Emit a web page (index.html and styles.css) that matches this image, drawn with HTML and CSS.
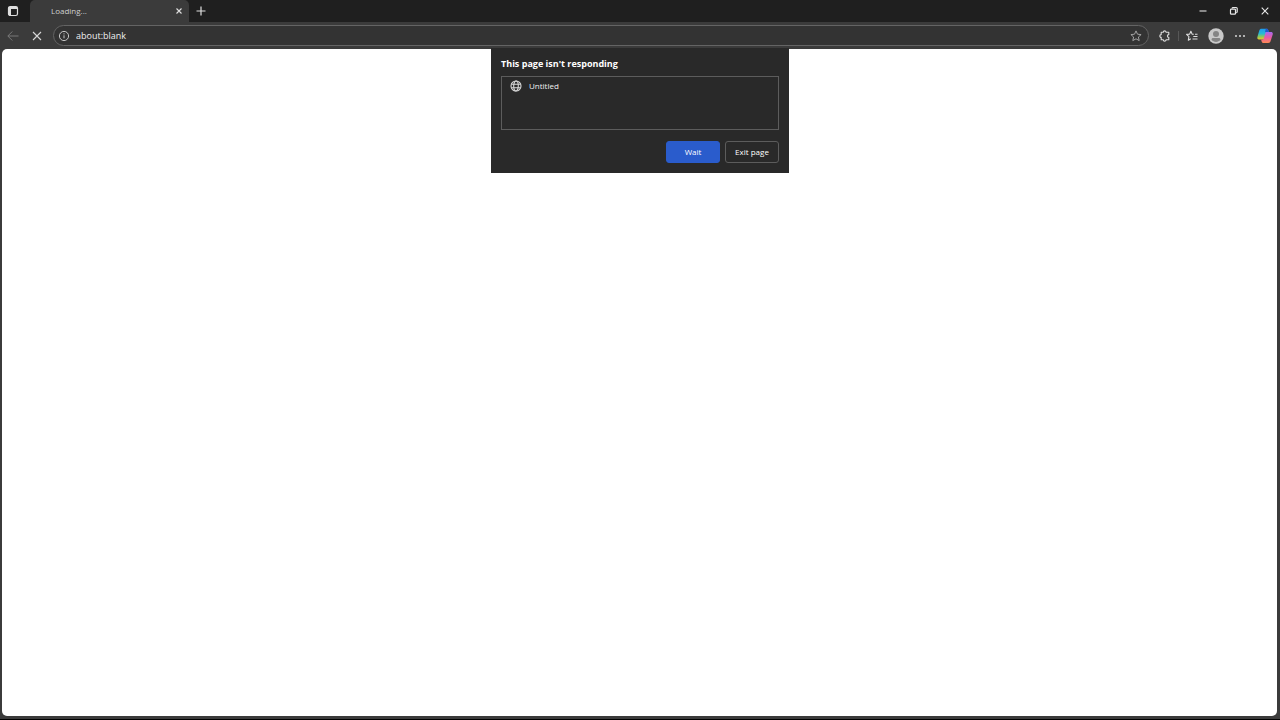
FILE: index.html
```html
<!DOCTYPE html>
<html lang="en">
<head>
    <meta charset="UTF-8">
    <meta name="viewport" content="width=device-width, initial-scale=1.0">
    <title>Loading...</title>
    <link rel="stylesheet" href="styles.css">
</head>
<body>
    <!-- Tab strip -->
    <header class="titlebar">
        <button type="button" class="icon-button tab-actions" aria-label="Tab actions">
            <svg width="12" height="12" viewBox="0 0 12 12">
                <rect x="1.5" y="1.5" width="9" height="9" rx="1.8" fill="none" stroke="#dedede" stroke-width="1.2"/>
                <path d="M1.5 4V3.2a1.7 1.7 0 0 1 1.7-1.7h5.6a1.7 1.7 0 0 1 1.7 1.7V4H4v6.5h-.8a1.7 1.7 0 0 1-1.7-1.7z" fill="#dedede"/>
            </svg>
        </button>
        <div class="tab">
            <span class="tab-title">Loading...</span>
            <button type="button" class="icon-button tab-close" aria-label="Close tab">
                <svg width="8" height="8" viewBox="0 0 8 8">
                    <path d="M1.5 1.5l5 5M6.5 1.5l-5 5" stroke="#e0e0e0" stroke-width="1.1"/>
                </svg>
            </button>
        </div>
        <button type="button" class="icon-button new-tab" aria-label="New tab">
            <svg width="12" height="12" viewBox="0 0 12 12">
                <path d="M6 1.5v9M1.500 6h9" stroke="#e0e0e0" stroke-width="1.2"/>
            </svg>
        </button>
        <div class="window-controls">
            <button type="button" class="icon-button" aria-label="Minimize">
                <svg width="10" height="10" viewBox="0 0 10 10">
                    <path d="M1.5 5h7" stroke="#d0d0d0" stroke-width="1.2"/>
                </svg>
            </button>
            <button type="button" class="icon-button" aria-label="Restore">
                <svg width="10" height="10" viewBox="0 0 10 10" fill="none" stroke="#e8e8e8" stroke-width="1.2">
                    <rect x="1.5" y="3.2" width="5" height="5" rx="0.8"/>
                    <path d="M3.2 2.500V2.300c0-.5.4-.8.8-.8h3.200c.6 0 1 .4 1 1v3.300c0 .5-.3.8-.8.8h-.2"/>
                </svg>
            </button>
            <button type="button" class="icon-button" aria-label="Close">
                <svg width="10" height="10" viewBox="0 0 10 10">
                    <path d="M1.7 1.7l6.600 6.600M8.300 1.700L1.700 8.300" stroke="#e8e8e8" stroke-width="1.1"/>
                </svg>
            </button>
        </div>
    </header>

    <!-- Navigation and address bar -->
    <nav class="toolbar">
        <button type="button" class="icon-button" aria-label="Back" disabled>
            <svg width="12" height="12" viewBox="0 0 12 12" fill="none" stroke="#787878">
                <path d="M11.500 6H1M5.300 1.500L.8 6l4.500 4.500"/>
            </svg>
        </button>
        <button type="button" class="icon-button" aria-label="Stop loading">
            <svg width="10" height="10" viewBox="0 0 10 10">
                <path d="M1 1l8 8M9 1L1 9" stroke="#d8d8d8" stroke-width="1.1"/>
            </svg>
        </button>
        <div class="address-bar">
            <svg width="12" height="12" viewBox="0 0 12 12" fill="none" stroke="#c4c4c4">
                <circle cx="6" cy="6" r="4.600"/>
                <path d="M6 5.300v3M6 3.300v1.100"/>
            </svg>
            <input type="text" class="address-input" aria-label="Address" value="about:blank">
            <button type="button" class="icon-button" aria-label="Add to favorites">
                <svg width="12" height="12" viewBox="0 0 12 12" fill="none" stroke="#a2a2a2" stroke-linejoin="round">
                    <path d="M6 .9l1.500 3.300 3.600.4-2.700 2.400.8 3.600L6 8.800l-3.200 1.800.8-3.600L.9 4.600l3.600-.4z"/>
                </svg>
            </button>
        </div>
        <div class="toolbar-actions">
            <button type="button" class="icon-button" aria-label="Extensions">
                <svg width="12" height="12" viewBox="0 0 12 12" fill="none" stroke="#dcdcdc" stroke-width="1.1" stroke-linejoin="round">
                    <path d="M2.200 2.300h2.100a1.400 1.400 0 0 1 2.800 0h2.700v2.300a1.400 1.400 0 0 0 0 2.800v2.300H7.100a1.400 1.400 0 0 1-2.800 0H2.200V7.400a1.400 1.400 0 0 1 0-2.800z"/>
                </svg>
            </button>
            <span class="divider"></span>
            <button type="button" class="icon-button" aria-label="Favorites">
                <svg width="12" height="12" viewBox="0 0 12 12" fill="none" stroke="#dcdcdc" stroke-width="1.1" stroke-linejoin="round">
                    <path d="M7.800 4.300l-1.700-.2L4.900 1.200 3.600 4.100l-3 .3 2.300 2.200-.6 3.700 2.500-1.500M7.300 6.500h4.200M6.500 9h5M9 4.200h2.500"/>
                </svg>
            </button>
            <button type="button" class="icon-button avatar" aria-label="Profile">
                <svg width="16" height="16" viewBox="0 0 16 16">
                    <circle cx="8" cy="8" r="7.700" fill="#c9c9c9"/>
                    <circle cx="8" cy="6" r="3" fill="#858585"/>
                    <path d="M3.500 11.800c0-1 .7-1.700 1.700-1.700h5.600c1 0 1.700.7 1.700 1.700-1.200 1.400-2.700 2.100-4.500 2.100s-3.300-.7-4.500-2.100z" fill="#858585"/>
                </svg>
            </button>
            <button type="button" class="icon-button" aria-label="Settings and more">
                <svg width="12" height="12" viewBox="0 0 12 12" fill="#d8d8d8">
                    <circle cx="2" cy="6" r="1"/>
                    <circle cx="6" cy="6" r="1"/>
                    <circle cx="10" cy="6" r="1"/>
                </svg>
            </button>
            <button type="button" class="icon-button copilot" aria-label="Copilot">
                <svg width="16" height="16" viewBox="0 0 16 16">
                    <defs>
                        <linearGradient id="cool" x1="0" y1="0" x2="0" y2="1">
                            <stop offset="0" stop-color="#1c9bf0"/>
                            <stop offset="0.45" stop-color="#28b9d4"/>
                            <stop offset="0.75" stop-color="#8fca55"/>
                            <stop offset="1" stop-color="#f2c42d"/>
                        </linearGradient>
                        <linearGradient id="warm" x1="0" y1="0" x2="0" y2="1">
                            <stop offset="0" stop-color="#a66af0"/>
                            <stop offset="0.5" stop-color="#e85aa5"/>
                            <stop offset="1" stop-color="#ff8a52"/>
                        </linearGradient>
                    </defs>
                    <path d="M4.600.8h4.900c1 0 1.500.6 1.800 1.500l.4 1.500-1.900 6.200c-.3 1-.8 1.500-1.800 1.500H2C.6 11.500 0 10.500.4 9l1.900-6.400C2.700 1.400 3.400.8 4.600.8z" fill="url(#cool)"/>
                    <path d="M8.800.8h.7c1 0 1.500.6 1.800 1.500l.4 1.700H8z" fill="#2456cf"/>
                    <path d="M9.600 4h4.300c1.500 0 2.200 1 1.800 2.500l-2 6.300c-.4 1.400-1.100 2.200-2.500 2.200H6.400c-1 0-1.500-.6-1.800-1.500l-.5-2h1.500c.6 0 1-.4 1.200-1l1.500-5.200C8.500 4.500 8.900 4 9.600 4z" fill="url(#warm)"/>
                </svg>
            </button>
        </div>
    </nav>

    <main class="content">
        <div class="page"></div>
        <section class="dialog" role="dialog" aria-labelledby="dialogTitle">
            <h1 id="dialogTitle" class="dialog-title">This page isn't responding</h1>
            <ul class="page-list">
                <li class="page-item">
                    <svg width="12" height="12" viewBox="0 0 12 12" fill="none" stroke="#d8d8d8" stroke-width="1.1">
                        <circle cx="6" cy="6" r="5"/>
                        <ellipse cx="6" cy="6" rx="2.300" ry="5"/>
                        <path d="M1.500 4.200h9M1.500 7.800h9"/>
                    </svg>
                    <span>Untitled</span>
                </li>
            </ul>
            <div class="dialog-buttons">
                <button type="button" class="button primary">Wait</button>
                <button type="button" class="button">Exit page</button>
            </div>
        </section>
    </main>
</body>
</html>
```
FILE: styles.css
```css
* {
    box-sizing: border-box;
}

body {
    margin: 0;
    height: 100vh;
    display: flex;
    flex-direction: column;
    background-color: #3b3b3b;
    border-bottom: 1px solid #000;
    color: #f0f0f0;
    font-family: "Open Sans", "Noto Sans", sans-serif;
    font-size: 8px;
    overflow: hidden;
}

button,
input {
    font: inherit;
    color: inherit;
}

svg {
    display: block;
}

.icon-button {
    display: flex;
    align-items: center;
    justify-content: center;
    width: 24px;
    height: 20px;
    padding: 0;
    border: none;
    background: none;
    flex-shrink: 0;
}

/* Tab strip */
.titlebar {
    display: flex;
    align-items: center;
    height: 22px;
    background-color: #1f1f1f;
}

.tab-actions {
    width: 26px;
    margin-right: 4px;
}

.tab {
    display: flex;
    align-items: center;
    justify-content: space-between;
    width: 159px;
    height: 22px;
    padding-left: 21px;
    background-color: #3b3b3b;
    border-radius: 5px 5px 0 0;
}

.tab-title {
    padding-bottom: 2px;
    color: #cfcfcf;
}

.tab-close {
    width: 20px;
}

.window-controls {
    display: flex;
    gap: 7px;
    margin-left: auto;
    padding-right: 3px;
}

/* Toolbar */
.toolbar {
    display: flex;
    align-items: center;
    height: 27px;
    padding-left: 1px;
    flex-shrink: 0;
}

.address-bar {
    display: flex;
    align-items: center;
    flex: 1;
    height: 21px;
    margin-left: 4px;
    padding-left: 4px;
    background-color: #333;
    border: 1px solid #646464;
    border-radius: 11px;
}

.address-input {
    flex: 1;
    min-width: 0;
    margin-left: 6px;
    padding: 0;
    border: none;
    outline: none;
    background: none;
    font-size: 9px;
}

.toolbar-actions {
    display: flex;
    align-items: center;
    padding-left: 4px;
}

.divider {
    width: 1px;
    height: 10px;
    margin: 0 1px;
    background-color: #575757;
}

.copilot {
    width: 28px;
    padding-right: 2px;
}

/* Page area */
.content {
    position: relative;
    display: flex;
    flex: 1;
    padding: 0 3px 3px 2px;
}

.page {
    flex: 1;
    background-color: #fff;
    border-radius: 5px;
}

/* Dialog hangs from the bottom of the toolbar */
.dialog {
    position: absolute;
    top: -1px;
    left: 50%;
    transform: translateX(-50%);
    width: 298px;
    padding: 9px 10px 10px;
    background-color: #292929;
}

.dialog-title {
    margin: 0;
    font-size: 9px;
    line-height: 14px;
    color: #fff;
}

.page-list {
    height: 54px;
    margin: 5px 0 11px;
    padding: 3px 8px;
    border: 1px solid #5c5c5c;
    list-style: none;
}

.page-item {
    display: flex;
    align-items: center;
    gap: 7px;
    line-height: 12px;
}

.dialog-buttons {
    display: flex;
    justify-content: flex-end;
    gap: 5px;
}

.button {
    width: 54px;
    height: 22px;
    padding: 0 0 2px;
    background-color: #292929;
    border: 1px solid #5c5c5c;
    border-radius: 3px;
    color: #fff;
}

.primary {
    background-color: #2a5ccc;
    border-color: #2a5ccc;
}
```
